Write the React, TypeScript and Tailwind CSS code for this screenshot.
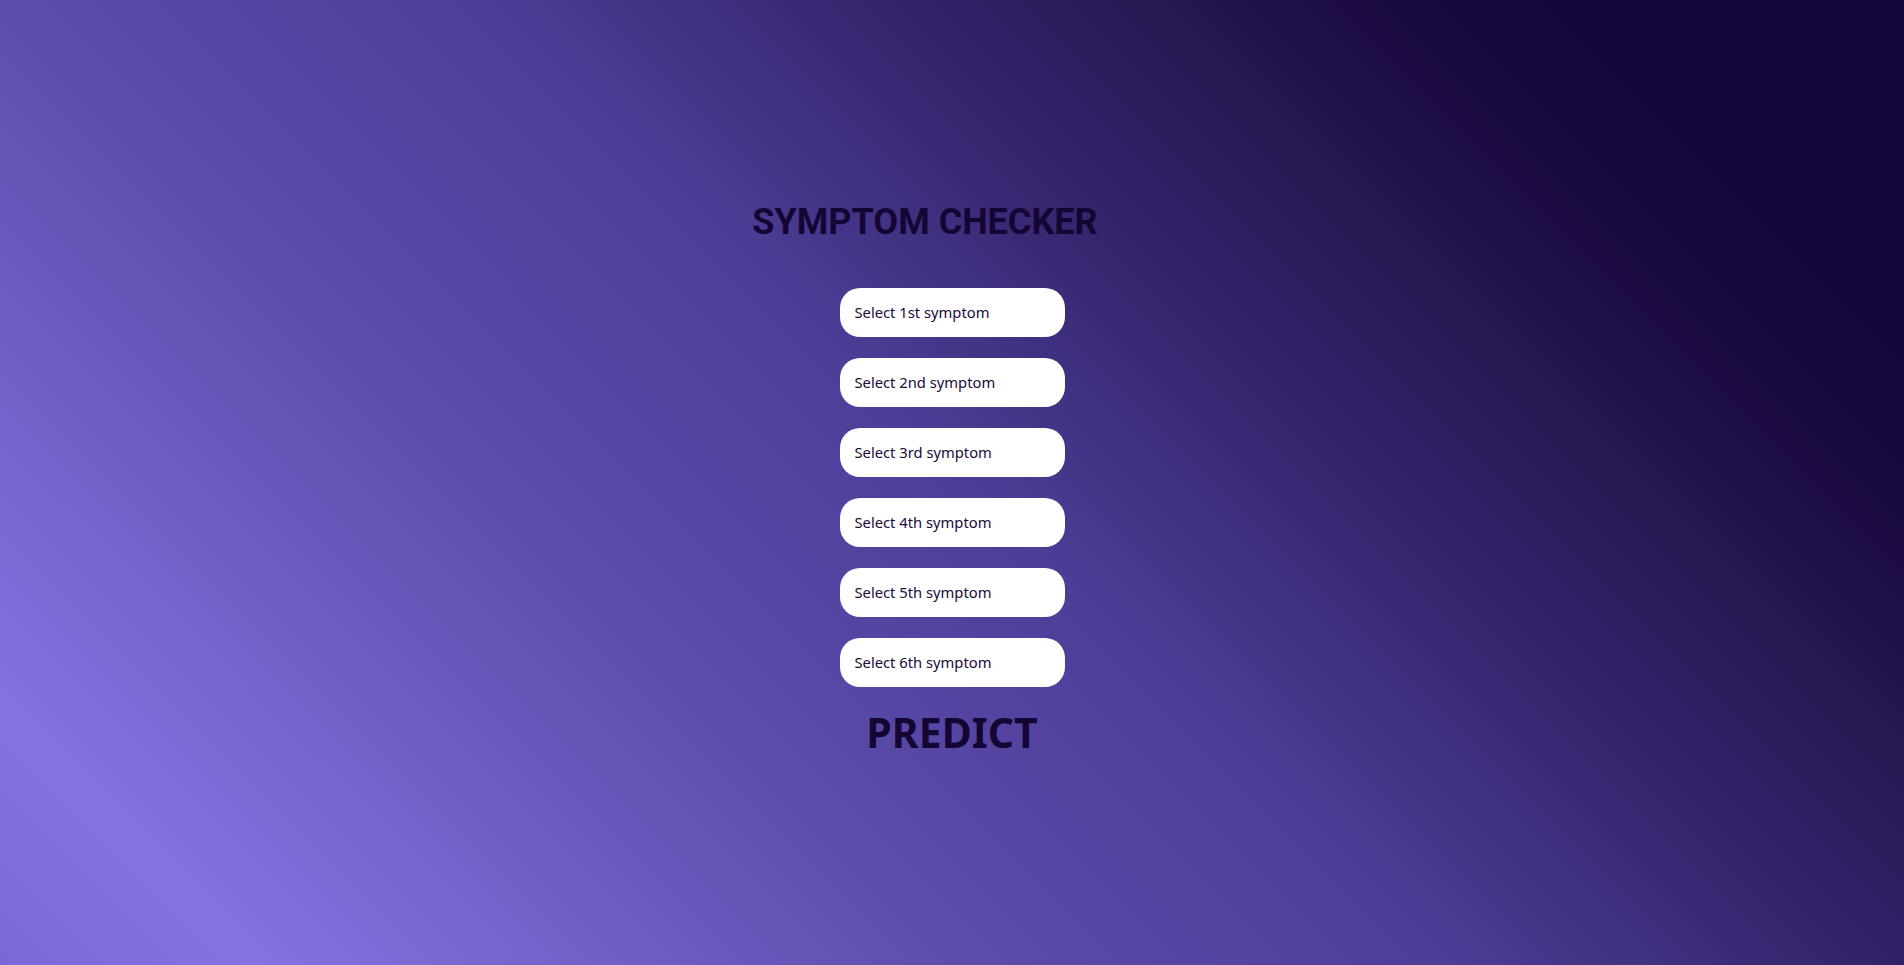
import React from "react";

const symptoms: string[] = ["1st", "2nd", "3rd", "4th", "5th", "6th"];

const SymptomChecker: React.FC = () => {
  return (
    <div className="min-h-screen w-full bg-[linear-gradient(45deg,#7b68d8_0%,#8473e0_9%,#5c4cab_34%,#4e3e98_50%,#33236a_65%,#2a1a57_72%,#1b0b41_81%,#140638_88%,#130538_100%)]">
      <div className="flex flex-col items-center pt-[201px]">
        <h1 className="mr-[54px] text-[36px] leading-[42px] font-bold text-[#150534] font-['Roboto',sans-serif]">
          SYMPTOM CHECKER
        </h1>
        <div className="mt-[45px] flex flex-col gap-[21px]">
          {symptoms.map((s) => (
            <select
              key={s}
              defaultValue=""
              className="h-[49px] w-[225px] appearance-none rounded-[20px] bg-white px-[15px] text-[14.75px] text-[#21093a] outline-none font-['Noto_Sans',sans-serif]"
            >
              <option value="" disabled>
                Select {s} symptom
              </option>
            </select>
          ))}
        </div>
        <button className="mt-[21px] text-[41px] leading-[48px] font-bold text-[#150534] font-['Noto_Sans',sans-serif]">
          PREDICT
        </button>
      </div>
    </div>
  );
};

export default SymptomChecker;
